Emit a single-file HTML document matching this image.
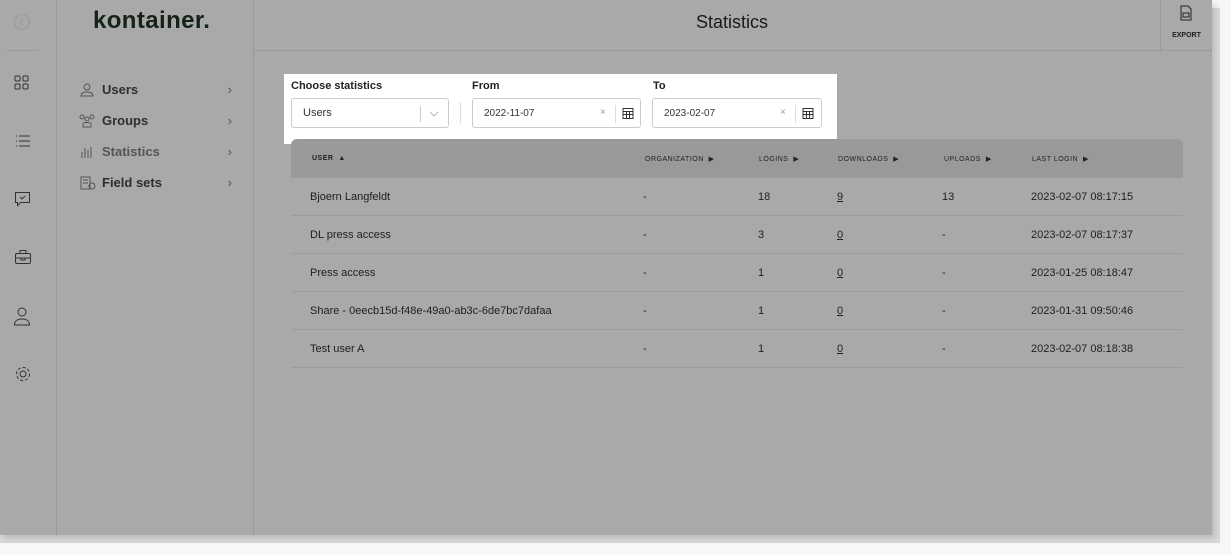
<!DOCTYPE html>
<html><head><style>
*{box-sizing:border-box;margin:0;padding:0}
body{width:1231px;height:555px;background:#f7f7f7;font-family:"Liberation Sans",sans-serif;position:relative;overflow:hidden}
#app{position:absolute;left:0;top:0;width:1212px;height:535px;background:#a9a9a9;box-shadow:3px 3px 6px rgba(0,0,0,.15)}
.shadowR{position:absolute;left:1212px;top:8px;width:8px;height:535px;background:#d9d9d9}
.shadowB{position:absolute;left:0;top:535px;width:1220px;height:8px;background:#d9d9d9}
.rail{position:absolute;left:0;top:0;width:57px;height:535px;border-right:1px solid #999}
.nav{position:absolute;left:57px;top:0;width:197px;height:535px;border-right:1px solid #999}
.top{position:absolute;left:254px;top:0;right:0;height:51px;border-bottom:1px solid #999}
.logo{position:absolute;left:93px;top:7px;font-size:24px;font-weight:bold;color:#142218;letter-spacing:0.4px}
.ni{position:absolute;left:80px;font-size:13px;font-weight:bold;color:#2e2e2e;width:152px}
.ni span{position:absolute;left:22px}
.ni i{position:absolute;right:0;font-style:normal;color:#555;font-weight:normal}
.title{position:absolute;left:696px;top:12px;font-size:18px;color:#1a1a1a}
.exp{position:absolute;left:1160px;top:0;width:52px;height:51px;border-left:1px solid #999;text-align:center;font-size:7px;font-weight:bold;color:#222}
.filt{position:absolute;left:284px;top:74px;width:553px;height:70px;background:#fff}
.lbl{position:absolute;top:6px;font-size:11px;font-weight:bold;color:#222}
.box{position:absolute;top:24px;height:30px;border:1px solid #ccc;border-radius:3px;font-size:10px;color:#333;padding:9px 0 0 11px}
.hdr{position:absolute;left:291px;top:139px;width:892px;height:39px;background:#999;font-size:7px;color:#222;border-radius:6px 6px 0 0;letter-spacing:.5px}
.hdr span{position:absolute;top:16px}
.row{position:absolute;left:291px;width:892px;height:38px;border-bottom:1px solid #9c9c9c;font-size:11px;color:#1e1e1e}
.row span{position:absolute;top:13px}
svg{position:absolute}
</style></head><body>
<div class="shadowR"></div><div class="shadowB"></div>
<div id="app">
<div class="rail">
<svg style="left:13px;top:13px" width="18" height="18"><circle cx="9" cy="9" r="7.5" fill="none" stroke="#999"/><path d="M10 6l-3 3 3 3" fill="none" stroke="#999"/></svg>
<div style="position:absolute;left:7px;top:50px;width:31px;border-top:1px solid #999"></div>
<svg style="left:14px;top:75px" width="16" height="16" fill="none" stroke="#333"><rect x="1" y="1" width="5" height="5" rx="1"/><rect x="9" y="1" width="5" height="5" rx="1"/><rect x="1" y="9" width="5" height="5" rx="1"/><rect x="9" y="9" width="5" height="5" rx="1"/></svg>
<svg style="left:15px;top:134px" width="16" height="14" fill="none" stroke="#333"><path d="M4 2h11M4 7h11M4 12h11M1 2h1M1 7h1M1 12h1"/></svg>
<svg style="left:14px;top:191px" width="18" height="16" fill="none" stroke="#333"><path d="M1.5 1.5h14v10h-9l-3 3v-3h-2z"/><path d="M6 6l2 2 3-3"/></svg>
<svg style="left:14px;top:249px" width="18" height="16" fill="none" stroke="#333"><rect x="1.5" y="4.5" width="15" height="10" rx="1.5"/><path d="M6 4.5v-3h6v3M1.5 9h15M7 9v2h4v-2"/></svg>
<svg style="left:13px;top:306px" width="18" height="20" fill="none" stroke="#333"><circle cx="9" cy="6" r="4"/><path d="M1.5 19c0-4 3-6 7.5-6s7.5 2 7.5 6z"/></svg>
<svg style="left:14px;top:365px" width="18" height="18" fill="none" stroke="#333"><circle cx="9" cy="9" r="3"/><circle cx="9" cy="9" r="6.5" stroke-dasharray="3 2"/></svg>
</div>
<div class="nav"></div>
<div class="logo">kontainer.</div>
<div class="ni" style="top:82px"><svg style="left:0;top:1px" width="14" height="14" fill="none" stroke="#555"><circle cx="7" cy="4" r="3"/><path d="M1 13c0-3 3-4 6-4s6 1 6 4z"/></svg><span>Users</span><i>›</i></div>
<div class="ni" style="top:113px"><svg style="left:-2px;top:1px" width="18" height="14" fill="none" stroke="#555"><circle cx="4" cy="3" r="2"/><circle cx="9" cy="5" r="2"/><circle cx="14" cy="3" r="2"/><path d="M5 13v-3c0-2 8-2 8 0v3z"/></svg><span>Groups</span><i>›</i></div>
<div class="ni" style="top:144px;color:#555"><svg style="left:0;top:1px" width="14" height="14" fill="none" stroke="#555"><path d="M2 13V7M5 13V3M8 13V5M11 13V2"/></svg><span>Statistics</span><i>›</i></div>
<div class="ni" style="top:175px"><svg style="left:0;top:1px" width="16" height="14" fill="none" stroke="#555"><path d="M1 1h9v12H1zM3 4h5M3 7h5"/><circle cx="12" cy="10" r="3"/></svg><span>Field sets</span><i>›</i></div>
<div class="top"></div>
<div class="title">Statistics</div>
<div class="exp"><svg style="left:19px;top:5px" width="12" height="16" fill="none" stroke="#222"><path d="M1 1h7l3 3v11H1z"/><rect x="3" y="8" width="6" height="4"/></svg><div style="position:absolute;top:32px;width:100%">EXPORT</div></div>
<div class="filt">
<div class="lbl" style="left:7px">Choose statistics</div>
<div class="lbl" style="left:188px">From</div>
<div class="lbl" style="left:369px">To</div>
<div class="box" style="left:7px;width:158px;font-size:11px;padding-top:8px">Users<div style="position:absolute;left:128px;top:7px;height:16px;border-left:1px solid #ccc"></div><svg style="left:137px;top:12px" width="10" height="7" fill="none" stroke="#bbb"><path d="M1 1l4 4 4-4"/></svg></div>
<div style="position:absolute;left:176px;top:28px;height:22px;border-left:1px solid #ddd"></div>
<div class="box" style="left:188px;width:169px">2022-11-07<span style="position:absolute;left:127px;top:8px;color:#999">×</span><div style="position:absolute;left:142px;top:6px;height:18px;border-left:1px solid #ddd"></div><svg style="left:149px;top:8px" width="12" height="12" fill="none" stroke="#333"><rect x="1" y="1.5" width="10" height="10"/><path d="M1 4.5h10M1 7.5h10M4.5 4.5v7M7.5 4.5v7"/></svg></div>
<div class="box" style="left:368px;width:170px">2023-02-07<span style="position:absolute;left:127px;top:8px;color:#999">×</span><div style="position:absolute;left:142px;top:6px;height:18px;border-left:1px solid #ddd"></div><svg style="left:149px;top:8px" width="12" height="12" fill="none" stroke="#333"><rect x="1" y="1.5" width="10" height="10"/><path d="M1 4.5h10M1 7.5h10M4.5 4.5v7M7.5 4.5v7"/></svg></div>
</div>
<div class="hdr"><span style="left:21px;font-weight:bold">USER &nbsp;&#9650;</span><span style="left:354px">ORGANIZATION &nbsp;&#9654;</span><span style="left:468px">LOGINS &nbsp;&#9654;</span><span style="left:547px">DOWNLOADS &nbsp;&#9654;</span><span style="left:653px">UPLOADS &nbsp;&#9654;</span><span style="left:741px">LAST LOGIN &nbsp;&#9654;</span></div>
<div class="row" style="top:178px"><span style="left:19px">Bjoern Langfeldt</span><span style="left:352px">-</span><span style="left:467px">18</span><span style="left:546px;text-decoration:underline">9</span><span style="left:651px">13</span><span style="left:740px">2023-02-07 08:17:15</span></div>
<div class="row" style="top:216px"><span style="left:19px">DL press access</span><span style="left:352px">-</span><span style="left:467px">3</span><span style="left:546px;text-decoration:underline">0</span><span style="left:651px">-</span><span style="left:740px">2023-02-07 08:17:37</span></div>
<div class="row" style="top:254px"><span style="left:19px">Press access</span><span style="left:352px">-</span><span style="left:467px">1</span><span style="left:546px;text-decoration:underline">0</span><span style="left:651px">-</span><span style="left:740px">2023-01-25 08:18:47</span></div>
<div class="row" style="top:292px"><span style="left:19px">Share - 0eecb15d-f48e-49a0-ab3c-6de7bc7dafaa</span><span style="left:352px">-</span><span style="left:467px">1</span><span style="left:546px;text-decoration:underline">0</span><span style="left:651px">-</span><span style="left:740px">2023-01-31 09:50:46</span></div>
<div class="row" style="top:330px"><span style="left:19px">Test user A</span><span style="left:352px">-</span><span style="left:467px">1</span><span style="left:546px;text-decoration:underline">0</span><span style="left:651px">-</span><span style="left:740px">2023-02-07 08:18:38</span></div>
</div>
</body></html>
